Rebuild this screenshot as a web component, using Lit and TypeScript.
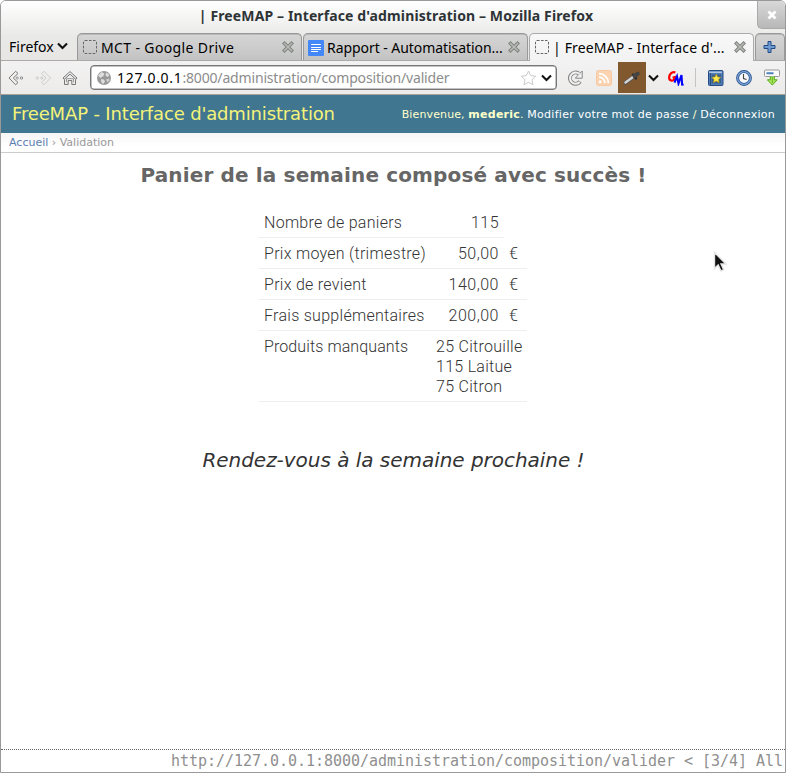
import { LitElement, html, svg, css } from "lit";
import { customElement } from "lit/decorators.js";

const icon = (w: number, h: number, body: unknown) =>
  html`<svg width=${w} height=${h} viewBox="0 0 ${w} ${h}" fill="none">${body}</svg>`;

const icons = {
  close: icon(12, 12, svg`<path d="M2.5 2.5 9.5 9.5M9.5 2.5 2.5 9.5" stroke="#80857e" stroke-width="3.6" stroke-linecap="square"/><path d="M2.5 2.5 9.5 9.5M9.5 2.5 2.5 9.5" stroke="#b9bab7" stroke-width="1.5" stroke-linecap="square"/>`),
  blank: icon(15, 15, svg`<rect x=".5" y=".5" width="13" height="13" rx="1.5" stroke="#666" stroke-dasharray="2.6 1.4"/>`),
  doc: icon(16, 16, svg`<rect width="16" height="16" rx="1" fill="#4387f8"/><path d="M3 4.5h10M3 7.5h10M3 9.5h10M3 11.5h7" stroke="#fff"/>`),
  chevron: icon(11, 8, svg`<path d="M1 1.5 5.5 6 10 1.5" stroke="#111" stroke-width="2.1"/>`),
  plus: icon(14, 14, svg`<path d="M5 1.5h3v4h4v3h-4v4h-3v-4h-4v-3h4z" fill="#6f9bd1" stroke="#204a87"/>`),
  back: icon(17, 16, svg`<path d="M1 8 7.6 1.3 10 3.5 5.3 8 10 12.5 7.6 14.8Z" stroke="#777"/><circle cx="9.2" cy="8" r="1.1" stroke="#999"/><circle cx="13.5" cy="8" r="1.2" stroke="#888"/>`),
  forward: icon(17, 16, svg`<path d="M15.5 8 8.9 1.3 6.5 3.5 11.2 8 6.5 12.5 8.9 14.8Z" stroke="#ccc"/><circle cx="6.9" cy="8" r="1.1" stroke="#ccc"/><circle cx="2.3" cy="8" r="1.2" stroke="#ccc"/>`),
  home: icon(16, 16, svg`<path d="M1 8 8 1.6 15 8 13.9 9.4 8 4.2 2.1 9.4Z" fill="#eee" stroke="#777"/><path d="M2.5 9.5V14.5H6.2V10.5H9.8V14.5H13.5V9.5" stroke="#777"/><path d="M4.5 12.3V8.7h7v3.6" stroke="#999"/>`),
  globe: icon(16, 16, svg`<circle cx="8" cy="8" r="7" fill="#999"/><path d="M2 5.5 5.5 2 8.5 3.5 7.5 6 4.5 8ZM5 9l3 .5 1 2-2 2.8-1.8-2.3ZM10 2.5l3.5 2L12 7 9.5 6Z" fill="#ddd"/><path d="M10 9.5l3-1 .5 2-2 2Z" fill="#d0d0d0"/>`),
  star: icon(17, 16, svg`<path d="M8.5 1 10.7 5.6 15.8 6.2 12 9.7 13 14.8 8.5 12.2 4 14.8 5 9.7 1.2 6.2 6.3 5.6Z" fill="#fff" stroke="#c9c9c9"/>`),
  reload: icon(16, 16, svg`<path d="M13 11.5A5.6 5.6 0 1 1 11.8 3.6" stroke="#858585" stroke-width="4"/><path d="M15.2 1v7.2H8.3Z" fill="#f4f4f4" stroke="#858585"/><path d="M12.7 12A5.6 5.6 0 1 1 12.4 4" stroke="#f1f1f1" stroke-width="2"/>`),
  feed: icon(16, 16, svg`<rect x=".5" y=".5" width="15" height="15" rx="2" fill="#fbd3b0" stroke="#f5c9a4"/><circle cx="4.2" cy="11.8" r="1.5" fill="#fff"/><path d="M3 7.1a6 6 0 0 1 6 6M3 3.7a9.4 9.4 0 0 1 9.4 9.4" stroke="#fff" stroke-width="1.8"/>`),
  dropper: icon(18, 16, svg`<path d="M2.5 12.7 11 6.5" stroke="#555" stroke-width="4" stroke-linecap="round"/><path d="M2.5 12.5 10 7" stroke="#d4d4d4" stroke-width="2.4" stroke-linecap="round"/><path d="M10 4.6 13 8.4" stroke="#2a2a2a" stroke-width="2.4" stroke-linecap="round"/><path d="M11.5 6 14.8 3.7" stroke="#444" stroke-width="4" stroke-linecap="round"/>`),
  gm: icon(17, 16, svg`<path d="M7.4 2.6C4 1 .9 4.4 1.2 8.2c.3 3 4.2 3.3 5.6.6V7L4.6 7.8" stroke="#f00" stroke-width="2.2"/><path d="M6.5 12.7 9 6.3l1.5 7.2 3-8.5.6 9.5 1.5.2" stroke="#00f" stroke-width="2.1"/>`),
  bookmarks: icon(16, 16, svg`<rect x=".5" y=".5" width="14.5" height="15" rx="1" fill="#527fb8" stroke="#244b83"/><path d="M1 2.2h13" stroke="#dbe6f3"/><path d="M2.5 3v12" stroke="#274d83"/><rect x="3.6" y="4.5" width="9.6" height="9" fill="#3b5f8f"/><path d="M8.3 4.2 9.6 7l3.1.4-2.2 2.1.5 3.1-2.7-1.5-2.8 1.5.6-3.1-2.3-2.1 3.2-.4Z" fill="#fce94f" stroke="#c4a000" stroke-width=".6"/>`),
  clock: icon(16, 16, svg`<circle cx="8" cy="8" r="6.4" fill="#f5f7fa" stroke="#28528f" stroke-width="3"/><circle cx="8" cy="8" r="6.4" stroke="#7ea5d8" stroke-width="1.3"/><path d="M7.5 4v4.5l3 1" stroke="#444" stroke-width="1.1"/>`),
  download: icon(16, 17, svg`<rect x=".5" y="1" width="15" height="6.5" rx="1" fill="#fafafa" stroke="#999"/><path d="M2.5 4.2h7" stroke="#4d80bd" stroke-width="2"/><path d="M6.3 7.5v3.3H3.4l4.9 5.3 4.9-5.3h-2.9V7.5" fill="#a7e75e" stroke="#58a817"/><path d="M8.3 8v6" stroke="#58a817" stroke-width=".8"/>`),
  pointer: icon(14, 22, svg`<path d="M1.5 1.5V17.5L5.2 14 8 20 10.7 18.7 8 13H13Z" fill="#111" stroke="#e4e4e4" stroke-width="1.4"/>`),
};

interface Line { label: string; value: string; unit?: string }

@customElement("app-root")
export class AppRoot extends LitElement {
  static styles = css`
    :host { display: block; height: 773px; background: #fff; }
    * { box-sizing: border-box; }
    svg { display: block; flex: none; }
    .window { height: 100%; display: flex; flex-direction: column; border: 1px solid #999; border-radius: 6px 6px 0 0; overflow: hidden; white-space: nowrap; }
    .top { height: 59px; flex: none; position: relative; background: linear-gradient(#fff, #e9e9e8 60%, #e7e6e4); font: 14px/20px "Noto Sans", sans-serif; color: #000; display: flex; flex-direction: column; }
    .title { height: 32px; text-align: center; font-weight: bold; line-height: 30px; color: #2e3436; padding-left: 6px; letter-spacing: .12px; }
    .wclose { position: absolute; right: 0; top: 0; width: 28px; height: 28px; border: solid #aaa; border-width: 0 0 1px 1px; border-radius: 0 0 0 5px; background: linear-gradient(#d8d8d8, #b8b8b8); display: flex; align-items: center; justify-content: center; }
    .tabs { display: flex; height: 27px; gap: 1px; }
    .menu { width: 75px; padding-left: 8px; display: flex; align-items: center; gap: 3px; }
    .menu svg { margin-top: -2px; }
    .tab { width: 225px; display: flex; align-items: center; padding: 1px 7px 0 5px; border: solid #999; border-width: 1px 1px 0; border-radius: 5px 5px 0 0; background: linear-gradient(#d6d6d6, #c3c3c3); box-shadow: inset 0 1px #b9b9b9; }
    .tab.docs { padding-left: 4px; }
    .tab span { flex: 1; overflow: hidden; }
    .tab svg:last-child { margin-top: -2px; }
    .tab.active { background: linear-gradient(#f8f8f8, #f3f2f2); box-shadow: none; border-color: #aaa; margin-bottom: -1px; padding-bottom: 1px; }
    .s1 { letter-spacing: .37px; margin-left: 3px; }
    .s2 { letter-spacing: -.06px; margin-left: 3px; }
    .s3 { letter-spacing: .14px; margin-left: 3px; }
    .new { width: 30px; justify-content: center; padding: 1px 0 0; }
    .nav { height: 35px; flex: none; border-top: 1px solid #aaa; border-bottom: 1px solid #a9a29b; background: linear-gradient(#f3f2f2, #ecebea); display: flex; align-items: center; padding-left: 7px; font: 14px/20px "Noto Sans", sans-serif; }
    .url { width: 467px; height: 25px; display: flex; align-items: center; padding: 0 4px 0 5px; margin: 0 10px 0 12px; border: 1px solid #777; border-radius: 4px; background: #fff; color: #8c8c8c; box-shadow: inset 0 0 0 .5px #888; }
    .host { color: #000; letter-spacing: .68px; margin-left: 5px; }
    .path { flex: 1; letter-spacing: -.17px; }
    .g9 { margin-left: 9px; } .g10 { margin-left: 10px; } .g12 { margin-left: 12px; } .g13 { margin-left: 13px; }
    .picker { width: 28px; height: 31px; background: #82582f; display: flex; align-items: center; justify-content: center; margin: 0 2px 0 6px; }
    .sep { width: 1px; height: 19px; background: #c4c4c4; margin: 0 12px 0 10px; }
    .header { height: 38px; flex: none; background: #417690; display: flex; justify-content: space-between; align-items: center; padding: 0 10px 0 11px; color: #ffc; font: 11px "DejaVu Sans", sans-serif; }
    .brand { font-size: 18px; color: #f4f379; letter-spacing: -.15px; padding-bottom: 2px; }
    .user { letter-spacing: .12px; }
    .user a { color: #fff; letter-spacing: .27px; }
    .user b { letter-spacing: .25px; }
    .crumbs { height: 20px; flex: none; padding-left: 8px; font: 11px/19px "DejaVu Sans", sans-serif; color: #999; border-bottom: 1px solid #ccc; background: linear-gradient(#f5f5f5, #fff 70%); }
    .crumbs a { color: #5b80b2; }
    .content { flex: 1; display: flex; flex-direction: column; align-items: center; color: #333; font: 300 16px/20px Roboto, sans-serif; }
    h1 { margin: 10px 0 0 1px; font: bold 20px/24px "DejaVu Sans", sans-serif; letter-spacing: .15px; color: #666; }
    .table { display: grid; grid-template-columns: 172px 73px 23px; margin: 20px 0 46px; letter-spacing: .28px; }
    .table > div { padding: 6px 5px 4px; border-bottom: 1px solid #eee; }
    .table .num { text-align: right; letter-spacing: .5px; }
    .table .unit { padding-left: 5px; }
    .table .none { border: 0; }
    .table .tight { letter-spacing: .1px; }
    .wide { grid-column: span 2; }
    .bye { font: italic 20px/24px "DejaVu Sans", sans-serif; letter-spacing: -.03px; padding-left: 1px; }
    .status { height: 23px; flex: none; border-top: 1px dotted #666; text-align: right; padding-right: 2px; font: 15px/22px "DejaVu Sans Mono", monospace; letter-spacing: -.03px; color: #8f8f8f; }
    .pointer { position: absolute; left: 713px; top: 251px; }
  `;

  private lines: Line[] = [
    { label: "Nombre de paniers", value: "115" },
    { label: "Prix moyen (trimestre)", value: "50,00", unit: "€" },
    { label: "Prix de revient", value: "140,00", unit: "€" },
    { label: "Frais supplémentaires", value: "200,00", unit: "€" },
  ];

  private missing = ["25 Citrouille", "115 Laitue", "75 Citron"];

  render() {
    return html`<div class="window">
      <div class="top">
        <div class="title">| FreeMAP – Interface d'administration – Mozilla Firefox</div>
        <div class="wclose"><svg width="12" height="12"><path d="M2.5 2.5 9.5 9.5M9.5 2.5 2.5 9.5" stroke="#fff" stroke-width="2.8"/></svg></div>
        <div class="tabs">
          <div class="menu">Firefox ${icons.chevron}</div>
          <div class="tab">${icons.blank}<span class="s1">MCT - Google Drive</span>${icons.close}</div>
          <div class="tab docs">${icons.doc}<span class="s2">Rapport - Automatisation...</span>${icons.close}</div>
          <div class="tab active">${icons.blank}<span class="s3">| FreeMAP - Interface d'...</span>${icons.close}</div>
          <div class="tab new">${icons.plus}</div>
        </div>
      </div>
      <div class="nav">
        ${icons.back}<span class="g10">${icons.forward}</span><span class="g10">${icons.home}</span>
        <div class="url">${icons.globe}<span class="host">127.0.0.1</span><span class="path">:8000/administration/composition/valider</span>${icons.star}<span>&nbsp;</span>${icons.chevron}</div>
        ${icons.reload}<span class="g13">${icons.feed}</span>
        <div class="picker">${icons.dropper}</div>${icons.chevron}<span class="g9">${icons.gm}</span>
        <div class="sep"></div>${icons.bookmarks}<span class="g12">${icons.clock}</span><span class="g12">${icons.download}</span>
      </div>
      <div class="header">
        <div class="brand">FreeMAP - Interface d'administration</div>
        <div class="user">Bienvenue, <b>mederic</b>. <a>Modifier votre mot de passe</a> / <a>Déconnexion</a></div>
      </div>
      <div class="crumbs"><a>Accueil</a> › Validation</div>
      <div class="content">
        <h1>Panier de la semaine composé avec succès !</h1>
        <div class="table">
          ${this.lines.map((l) => html`<div>${l.label}</div><div class="num">${l.value}</div><div class="unit ${l.unit ? "" : "none"}">${l.unit ?? ""}</div>`)}
          <div class="tight">Produits manquants</div>
          <div class="wide">${this.missing.map((m) => html`${m}<br />`)}</div>
        </div>
        <div class="bye">Rendez-vous à la semaine prochaine !</div>
      </div>
      <div class="status">http://127.0.0.1:8000/administration/composition/valider &lt; [3/4] All</div>
      <div class="pointer">${icons.pointer}</div>
    </div>`;
  }
}
